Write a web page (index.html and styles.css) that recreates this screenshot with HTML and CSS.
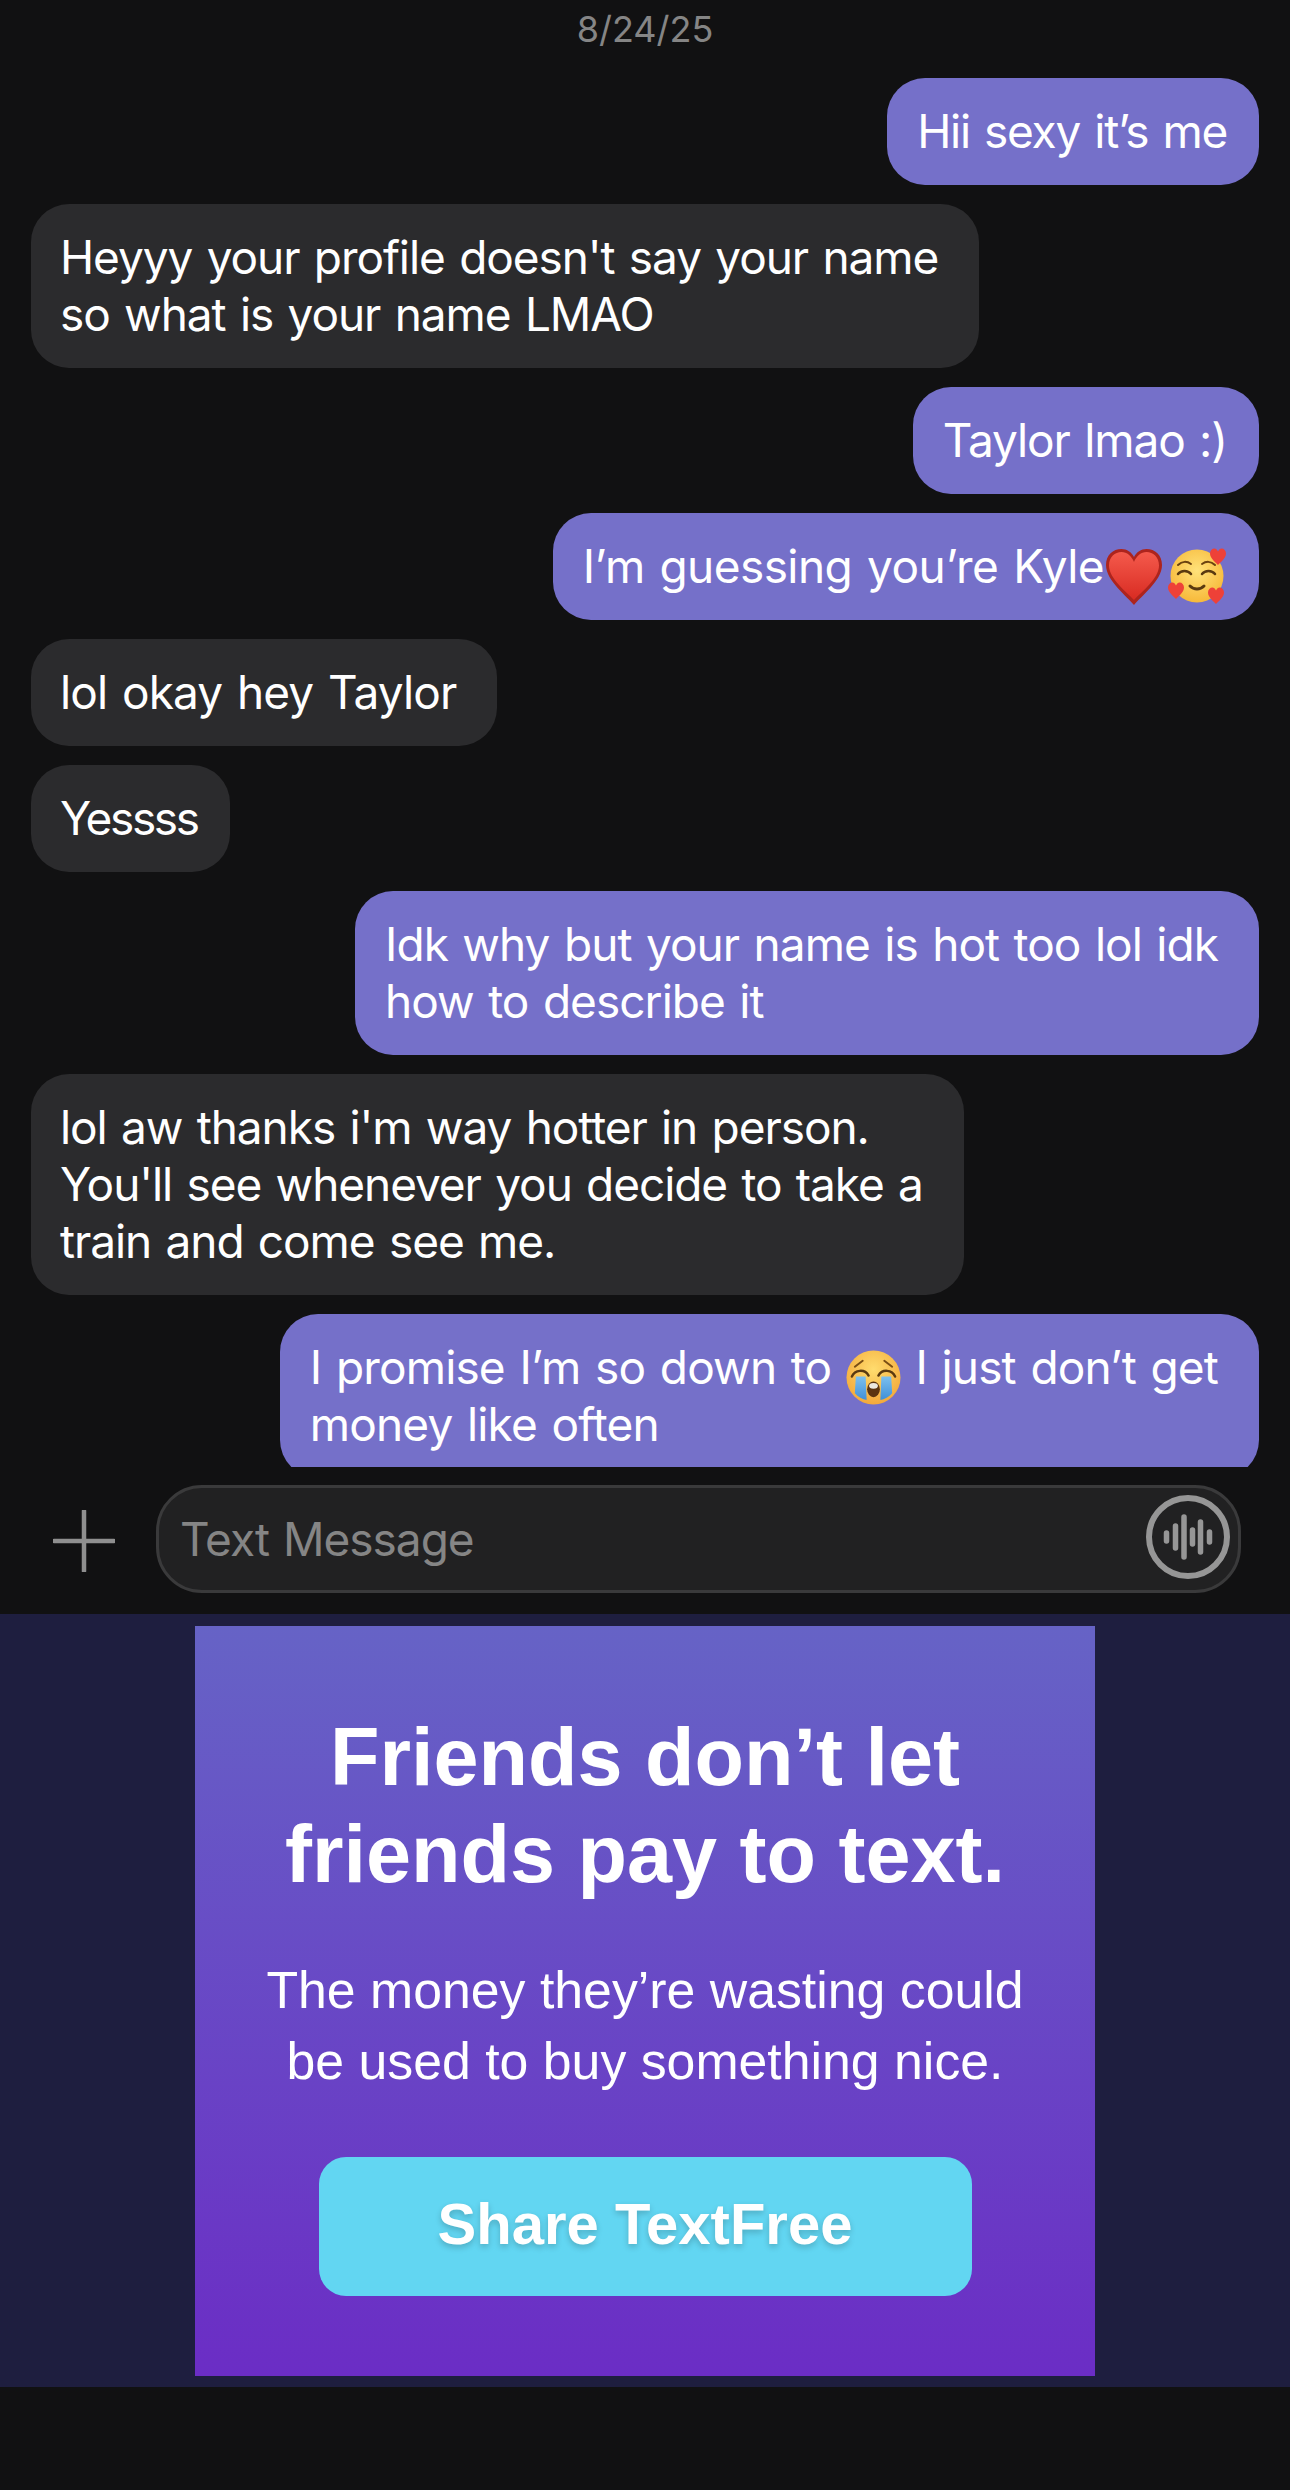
FILE: index.html
```html
<!DOCTYPE html>
<html lang="en">
<head>
  <meta charset="UTF-8">
  <meta name="viewport" content="width=device-width, initial-scale=1.0">
  <title>TextFree</title>
  <link rel="stylesheet" href="styles.css">
</head>
<body>

  <div class="thread">
    <div class="date">8/24/25</div>
    <div class="bubble sent snug">Hii sexy it’s me</div>
    <div class="bubble received roomy">Heyyy your profile doesn't say your name<br>so what is your name LMAO</div>
    <div class="bubble sent">Taylor lmao :)</div>
    <div class="bubble sent wider">I’m guessing you’re Kyle<svg class="emoji heart-emoji" viewBox="0 0 56 56">
        <defs>
          <linearGradient id="heartFill" x1="0" y1="0" x2="0" y2="1">
            <stop offset="0" stop-color="#f45a4c"/>
            <stop offset="1" stop-color="#d92b22"/>
          </linearGradient>
        </defs>
        <path d="M28 56C22 48 0 32 0 16 0 6 7 0 15.5 0 21 0 25.5 3 28 8 30.5 3 35 0 40.5 0 49 0 56 6 56 16 56 32 34 48 28 56z" fill="#ad241d"/>
        <path d="M28 51C21 43 3 30 3 16.5 3 8 9 3 15.5 3 21 3 25.5 7 28 13 30.5 7 35 3 40.5 3 47 3 53 8 53 16.5 53 30 35 43 28 51z" fill="url(#heartFill)"/>
      </svg><svg class="emoji face-emoji" viewBox="0 0 60 58">
        <defs>
          <radialGradient id="faceFill" cx="0.5" cy="0.4" r="0.6">
            <stop offset="0" stop-color="#ffe27a"/>
            <stop offset="1" stop-color="#f7b93a"/>
          </radialGradient>
        </defs>
        <circle cx="30" cy="29" r="26.5" fill="url(#faceFill)"/>
        <path d="M11 18c4-4 9-4 13-1M35 17c4-3 9-3 13 1" fill="none" stroke="#6b4310" stroke-width="2" stroke-linecap="round"/>
        <path d="M11 27c3-4 10-4 13 0M35 27c3-4 10-4 13 0" fill="none" stroke="#5a3a10" stroke-width="2.5" stroke-linecap="round"/>
        <path d="M23 39c4 4 10 4 14 0" fill="none" stroke="#5a3a10" stroke-width="3" stroke-linecap="round"/>
        <path d="M51 18c-3-3-8-7-8-11.5 0-3 2-5 4.5-5 1.5 0 2.5 1 3.5 3 1-2 2-3 3.5-3 2.5 0 4.5 2 4.5 5C59 11 54 15 51 18z" fill="#ee4138"/>
        <path d="M9 52c-3-3-8-7-8-11.5 0-3 2-5 4.5-5 1.5 0 2.5 1 3.5 3 1-2 2-3 3.5-3 2.5 0 4.5 2 4.5 5C17 45 12 49 9 52z" fill="#ee4138"/>
        <path d="M49 57c-3-3-8-7-8-11.5 0-3 2-5 4.5-5 1.5 0 2.5 1 3.5 3 1-2 2-3 3.5-3 2.5 0 4.5 2 4.5 5C57 50 52 54 49 57z" fill="#ee4138"/>
      </svg></div>
    <div class="bubble received roomy wide">lol okay hey Taylor</div>
    <div class="bubble received tight">Yessss</div>
    <div class="bubble sent roomy mid">Idk why but your name is hot too lol idk<br>how to describe it</div>
    <div class="bubble received roomy">lol aw thanks i'm way hotter in person.<br>You'll see whenever you decide to take a<br>train and come see me.</div>
    <div class="bubble sent roomy wide">I promise I’m so down to <svg class="emoji cry-emoji" viewBox="0 0 56 56">
        <defs>
          <radialGradient id="cryFill" cx="0.5" cy="0.35" r="0.65">
            <stop offset="0" stop-color="#ffdc6e"/>
            <stop offset="1" stop-color="#f3a93a"/>
          </radialGradient>
          <linearGradient id="tearFill" x1="0" y1="0" x2="0" y2="1">
            <stop offset="0" stop-color="#7cc0ee"/>
            <stop offset="1" stop-color="#3f8fd8"/>
          </linearGradient>
        </defs>
        <circle cx="28" cy="28" r="27.5" fill="url(#cryFill)"/>
        <path d="M9 17l8-6M47 17l-8-6" fill="none" stroke="#7a4e14" stroke-width="2" stroke-linecap="round"/>
        <path d="M6 27c3-7 13-8 17-1M33 26c4-7 14-6 17 1" fill="none" stroke="#5a3a10" stroke-width="2.5" stroke-linecap="round"/>
        <path d="M10 27h10l1 24c-4-1-9-3-12-7z" fill="url(#tearFill)"/>
        <path d="M36 27h10l1 17c-3 4-8 6-12 7z" fill="url(#tearFill)"/>
        <ellipse cx="28" cy="40" rx="6.5" ry="8" fill="#5b3410"/>
        <ellipse cx="28" cy="36.5" rx="4.5" ry="3" fill="#ece8df"/>
      </svg> I just don’t get<br>money like often</div>
  </div>

  <div class="composer">
    <svg class="plus" viewBox="0 0 62 62">
      <path d="M31 1v60M1 31h60" fill="none" stroke="#8f8f8f" stroke-width="4.5" stroke-linecap="round"/>
    </svg>
    <div class="input">
      <span class="placeholder">Text Message</span>
      <svg class="voice" viewBox="0 0 84 84">
        <circle cx="42" cy="42" r="39" fill="none" stroke="#969696" stroke-width="6"/>
        <g fill="none" stroke="#969696" stroke-width="5.5" stroke-linecap="round">
          <path d="M20.5 38v8M29.5 31v22M38 22v40M46.5 35v14M54.5 27v30M63.5 37v10"/>
        </g>
      </svg>
    </div>
  </div>

  <div class="ad-strip">
    <div class="ad">
      <h2 class="ad-title">Friends don’t let<br>friends pay to text.</h2>
      <p class="ad-copy">The money they’re wasting could<br>be used to buy something nice.</p>
      <div class="ad-button">Share TextFree</div>
    </div>
  </div>

</body>
</html>
```

FILE: styles.css
```css
body {
  margin: 0;
  height: 2490px;
  overflow: hidden;
  background: #111112;
  font-family: 'Inter', sans-serif;
}

/* Messages get cut off where the composer starts */
.thread {
  height: 1467px;
  overflow: hidden;
  padding: 0 31px;
  box-sizing: border-box;
  display: flex;
  flex-direction: column;
  gap: 19px;
}

.date {
  flex: none;
  height: 58.5px;
  padding-top: 9px;
  box-sizing: border-box;
  text-align: center;
  color: #858585;
  font-size: 36px;
  line-height: 40px;
}

.bubble {
  flex: none;
  padding: 25px 32px 25px 30px;
  border-radius: 38px;
  font-size: 46px;
  line-height: 57px;
  letter-spacing: -1.07px;
  word-spacing: 2.5px;
  color: #fff;
  white-space: nowrap;
}

.sent {
  align-self: flex-end;
  background: #7570c9;
}

.received {
  align-self: flex-start;
  background: #2b2b2d;
  padding-left: 29px;
}

/* Some bubbles keep extra room on the right of the text */
.roomy {
  padding-right: 41px;
}

/* Spacing tweaks so each line runs as long as it should */
.mid {
  letter-spacing: -0.97px;
}

.wide {
  letter-spacing: -0.85px;
}

.wider {
  letter-spacing: -0.58px;
}

.snug {
  letter-spacing: -1.25px;
}

.tight {
  letter-spacing: -2.3px;
}

.emoji {
  display: inline-block;
  margin: -10px 0;
}

.heart-emoji {
  width: 56px;
  height: 56px;
  margin-left: 2px;
  vertical-align: -12px;
}

.face-emoji {
  width: 60px;
  height: 58px;
  margin-left: 5px;
  vertical-align: -12px;
}

.cry-emoji {
  width: 55px;
  height: 55px;
  vertical-align: -11px;
}

.composer {
  height: 147px;
  display: flex;
  align-items: flex-start;
  box-sizing: border-box;
  padding: 18px 49px 0 53px;
}

.plus {
  flex: none;
  width: 62px;
  height: 62px;
  margin-top: 25px;
}

.input {
  flex: 1;
  height: 108px;
  margin-left: 41px;
  box-sizing: border-box;
  border: 3px solid #3a3a3b;
  border-radius: 46px;
  background: #212122;
  display: flex;
  align-items: center;
  justify-content: space-between;
  padding: 0 8px 0 21px;
}

.placeholder {
  color: #858585;
  font-size: 46px;
  letter-spacing: -1px;
  word-spacing: 2px;
}

.voice {
  width: 84px;
  height: 84px;
  margin-bottom: 4px;
}

.ad-strip {
  height: 773px;
  padding-top: 12px;
  box-sizing: border-box;
  background: #1e1e3f;
}

.ad {
  width: 900px;
  height: 750px;
  margin: 0 auto;
  padding-top: 83px;
  box-sizing: border-box;
  background: linear-gradient(180deg, #6663c6, #6b2dc5);
  font-family: 'Liberation Sans', Arial, sans-serif;
  color: #fff;
  text-align: center;
  display: flex;
  flex-direction: column;
  align-items: center;
}

.ad-title {
  margin: 0;
  font-size: 81px;
  line-height: 97px;
  font-weight: 700;
}

.ad-copy {
  margin: 51.5px 0 0;
  font-size: 51.8px;
  line-height: 71px;
}

.ad-button {
  width: 653px;
  height: 139px;
  margin-top: 60px;
  border-radius: 27px;
  background: #62d6f2;
  font-size: 58px;
  font-weight: 700;
  line-height: 133px;
  text-shadow: 0 3px 6px rgba(0, 0, 0, 0.2);
}
```
